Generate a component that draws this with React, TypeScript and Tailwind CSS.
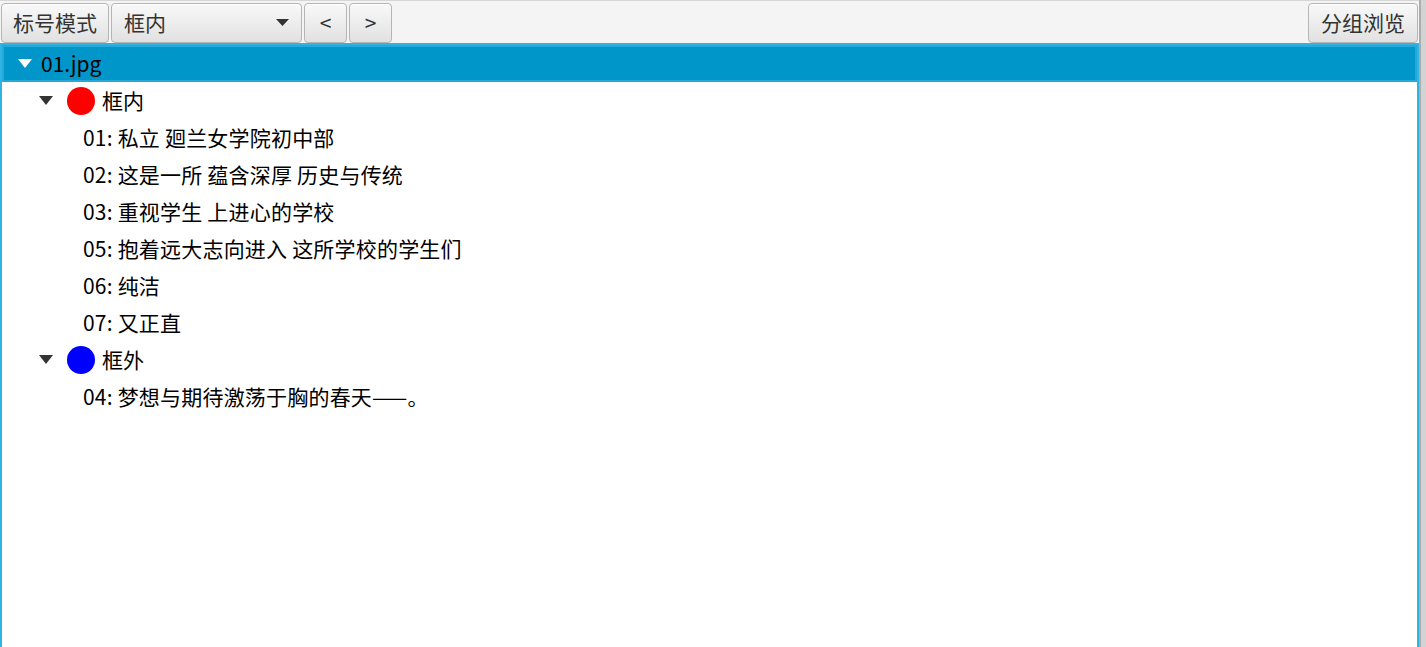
import React from 'react';

const FONT = { fontFamily: '"Noto Sans CJK SC", "Noto Sans", sans-serif' };

const groups = [
  {
    name: '框内',
    color: 'bg-[#ff0000]',
    items: [
      '01: 私立 廻兰女学院初中部',
      '02: 这是一所 蕴含深厚 历史与传统',
      '03: 重视学生 上进心的学校',
      '05: 抱着远大志向进入 这所学校的学生们',
      '06: 纯洁',
      '07: 又正直',
    ],
  },
  {
    name: '框外',
    color: 'bg-[#0000ff]',
    items: ['04: 梦想与期待激荡于胸的春天——。'],
  },
];

function Btn({ children, className = '' }: { children: React.ReactNode; className?: string }) {
  return (
    <button
      className={`h-[40px] flex items-center rounded-[4px] border border-[#b5b5b5] bg-gradient-to-b from-[#f9f9f9] to-[#e1e1e1] text-[21px] text-[#333] shadow-[inset_0_1px_0_#ffffff] ${className}`}
    >
      {children}
    </button>
  );
}

function Caret({ white }: { white?: boolean }) {
  return (
    <svg width="14" height="10" viewBox="0 0 14 10" className="shrink-0">
      <polygon points="0,0 14,0 7,9" fill={white ? '#ffffff' : '#333333'} />
    </svg>
  );
}

export default function App() {
  return (
    <div className="w-[1426px] h-[647px] flex bg-white overflow-hidden" style={FONT}>
      <div className="flex-1 flex flex-col min-w-0">
        {/* Toolbar */}
        <div className="h-[43px] shrink-0 bg-[#f4f4f4] border-t border-[#d6d6d6] flex items-center px-px pt-[1px] gap-[2px]">
          <Btn className="px-[11px]">标号模式</Btn>
          <Btn className="w-[191px] pl-[12px] pr-[12px] justify-between">
            <span>框内</span>
            <svg width="13" height="7" viewBox="0 0 13 7">
              <polygon points="0,0 13,0 6.5,7" fill="#333333" />
            </svg>
          </Btn>
          <Btn className="w-[43px] justify-center text-[17px]">&lt;</Btn>
          <Btn className="w-[43px] justify-center text-[17px]">&gt;</Btn>
          <div className="flex-1" />
          <Btn className="px-[12px]">分组浏览</Btn>
        </div>

        {/* Tree */}
        <div className="flex-1 border-2 border-b-0 border-[#2db4e4] bg-white text-[21px] text-black">
          <div className="h-[37px] bg-[#0096c9] border-2 border-[#28a8d6] flex items-center pl-[14px] gap-[9px] text-black">
            <Caret white />
            <span>01.jpg</span>
          </div>
          {groups.map((g) => (
            <div key={g.name}>
              <div className="h-[37px] flex items-center pl-[37px]">
                <Caret />
                <span className={`ml-[14px] w-[28px] h-[28px] rounded-full ${g.color}`} />
                <span className="ml-[7px]">{g.name}</span>
              </div>
              {g.items.map((t) => (
                <div key={t} className="h-[37px] flex items-center pl-[81px] tracking-[0.2px]">
                  {t}
                </div>
              ))}
            </div>
          ))}
        </div>
      </div>
      <div className="w-[7px] shrink-0 bg-[#d3d3d3] border-l-2 border-[#acacac]" />
    </div>
  );
}
